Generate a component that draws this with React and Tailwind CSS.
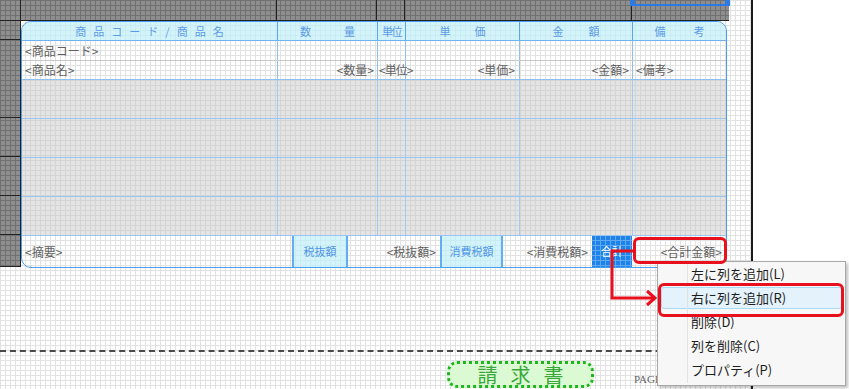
import React from "react";

const grid =
  "bg-fixed bg-[linear-gradient(to_right,#e2e2e2_1px,transparent_1px),linear-gradient(to_bottom,#e2e2e2_1px,transparent_1px)] [background-size:5px_5px]";
const darkGrid =
  "bg-fixed bg-[#8e8e8e] bg-[linear-gradient(to_right,#707070_1px,transparent_1px),linear-gradient(to_bottom,#707070_1px,transparent_1px)] [background-size:5px_5px]";
const selGrid =
  "bg-fixed bg-[#1f82e8] bg-[linear-gradient(to_right,#5eaaf2_1px,transparent_1px),linear-gradient(to_bottom,#5eaaf2_1px,transparent_1px)] [background-size:5px_5px]";

const cols = ["w-[256px]", "w-[100px]", "w-[28px]", "w-[114px]", "w-[113px]", "w-[93px]"];

function Row({ className = "", lineColor, children }) {
  return (
    <div className={`flex ${className}`}>
      {cols.map((w, i) => (
        <div
          key={i}
          className={`${w} h-full flex items-center ${i < 5 ? `border-r ${lineColor}` : ""}`}
        >
          {children ? children[i] : null}
        </div>
      ))}
    </div>
  );
}

const ph = "text-[12px] text-[#606060] leading-none whitespace-nowrap";
const hd = "text-[11px] text-[#5b9be6] leading-none whitespace-nowrap";
const label =
  "h-full flex items-center justify-center border-x-2 border-[#62aef2] bg-[#c2f0fb]/70 text-[11px] text-[#4d94e4]";

const menuItems = ["左に列を追加(L)", "右に列を追加(R)", "削除(D)", "列を削除(C)", "プロパティ(P)"];

export default function App() {
  return (
    <div
      className="relative w-[849px] h-[389px] overflow-hidden bg-white flex"
      style={{ fontFamily: '"Noto Sans CJK JP", "Noto Sans", sans-serif' }}
    >
      {/* Design canvas */}
      <div className={`w-[751px] h-full flex flex-col bg-white ${grid}`}>
        {/* page header band */}
        <div className="flex h-[21px]">
          <div className={`w-[21px] border-r border-b border-[#222] ${darkGrid}`} />
          <div className={`w-[256px] border-r border-b border-[#222] ${darkGrid}`} />
          <div className={`w-[100px] border-r border-b border-[#222] ${darkGrid}`} />
          <div className={`w-[28px] border-r border-b border-[#222] ${darkGrid}`} />
          <div className={`w-[227px] border-r border-b border-[#222] ${darkGrid}`} />
          <div className={`w-[97px] border-b border-[#222] ${darkGrid}`} />
        </div>

        {/* detail band */}
        <div className="flex">
          <div className="w-[21px] flex flex-col">
            <div className={`h-[19px] border-r border-b border-[#222] ${darkGrid}`} />
            <div className={`h-[78px] border-r border-b border-[#222] ${darkGrid}`} />
            <div className={`h-[39px] border-r border-b border-[#222] ${darkGrid}`} />
            <div className={`h-[39px] border-r border-b border-[#222] ${darkGrid}`} />
            <div className={`h-[39px] border-r border-b border-[#222] ${darkGrid}`} />
            <div className={`h-[32px] border-r border-b border-[#222] ${darkGrid}`} />
          </div>

          <div className="w-[706px] h-[247px] border border-[#4a9cec] rounded-[10px] overflow-hidden flex flex-col">
            <Row className="h-[19px] border-b border-[#6fb2f0] bg-[#c2f0fb]/70" lineColor="border-[#5aa6ee]">
              {[
                <div className={`${hd} w-full text-center tracking-[7px] pl-[7px]`}>商品コード/商品名</div>,
                <div className={`${hd} w-full flex justify-center gap-[33px]`}><span>数</span><span>量</span></div>,
                <div className={`${hd} w-full text-center tracking-[-1.5px] text-[10px]`}>単位</div>,
                <div className={`${hd} w-full flex justify-center gap-[24px]`}><span>単</span><span>価</span></div>,
                <div className={`${hd} w-full flex justify-center gap-[25px]`}><span>金</span><span>額</span></div>,
                <div className={`${hd} w-full flex justify-center gap-[28px]`}><span>備</span><span>考</span></div>,
              ]}
            </Row>
            <Row className="h-[20px] border-b border-[#c8c8c8]" lineColor="border-[#8cc0f2]">
              {[<span className={`${ph} text-[10px] pl-[3px]`}>&lt;商品コード&gt;</span>]}
            </Row>
            <Row className="h-[19px] border-b border-[#8cc0f2]" lineColor="border-[#8cc0f2]">
              {[
                <span className={`${ph} pl-[3px]`}>&lt;商品名&gt;</span>,
                <span className={`${ph} ml-auto pr-[3px]`}>&lt;数量&gt;</span>,
                <span className={`${ph} text-[8px] tracking-[-1px] pl-[1px]`}>&lt;単位&gt;</span>,
                <span className={`${ph} ml-auto pr-[4px]`}>&lt;単価&gt;</span>,
                <span className={`${ph} ml-auto pr-[3px]`}>&lt;金額&gt;</span>,
                <span className={`${ph} pl-[3px]`}>&lt;備考&gt;</span>,
              ]}
            </Row>
            {[0, 1, 2, 3].map((r) => (
              <Row key={r} className="h-[39px] border-b border-[#98c6f2] bg-[#c4c4c4]/45" lineColor="border-[#a2cbf3]" />
            ))}
            {/* footer row */}
            <div className="flex flex-1">
              <div className="w-[270px] flex items-center">
                <span className={`${ph} pl-[3px]`}>&lt;摘要&gt;</span>
              </div>
              <div className={`w-[56px] ${label}`}>税抜額</div>
              <div className="w-[92px] flex items-center justify-end pr-[4px]">
                <span className={ph}>&lt;税抜額&gt;</span>
              </div>
              <div className={`w-[63px] ${label}`}>消費税額</div>
              <div className="w-[89px] flex items-center justify-end pr-[4px]">
                <span className={ph}>&lt;消費税額&gt;</span>
              </div>
              <div className={`w-[40px] flex items-center justify-center text-[11px] text-white ${selGrid}`}>合計</div>
              <div className="w-[94px] flex items-center justify-end pr-[4px]">
                <span className={ph}>&lt;合計金額&gt;</span>
              </div>
            </div>
          </div>
        </div>

        <div className="h-[82px]" />
        <div className="h-[2px] border-t-2 border-dashed border-[#4a4a4a]" />

        {/* page footer band */}
        <div className="flex items-start pt-[9px] pl-[447px]">
          <div className="w-[147px] h-[27px] rounded-[10px] border-[3px] border-dotted border-[#1fb51f] bg-[#dbfad4] flex items-center justify-center">
            <span className="text-[20px] leading-none text-[#3aa83a] tracking-[13px] pl-[13px]">請求書</span>
          </div>
          <span
            className="ml-[40px] mt-[13px] text-[11px] text-[#666] leading-none"
            style={{ fontFamily: '"Liberation Serif", serif' }}
          >
            PAGE
          </span>
        </div>
      </div>

      <div className="w-[2px] h-full bg-[#1a1a1a]" />
      <div className="flex-1 bg-white" />

      {/* selection marker on page header */}
      <div className="absolute left-[632px] top-0 w-[96px] h-[6px] border-2 border-t-0 border-[#2b7be6]" />
      <div className="absolute left-[630px] top-0 w-[5px] h-[6px] bg-[#2b7be6]" />
      <div className="absolute left-[725px] top-0 w-[5px] h-[6px] bg-[#2b7be6]" />

      {/* context menu */}
      <div className="absolute left-[657px] top-[261px] w-[189px] h-[125px] bg-[#f7f7f7] border border-[#a8a8a8] shadow-[2px_2px_3px_rgba(0,0,0,0.25)]">
        <div className="absolute left-[29px] top-[2px] bottom-[2px] w-px bg-[#e2e2e2]" />
        <div className="flex flex-col">
          {menuItems.map((t, i) => (
            <div key={t} className="h-[24px] px-[3px] py-px">
              <div
                className={`h-full flex items-center pl-[29px] text-[13px] text-[#1e1e1e] rounded-[3px] ${
                  i === 1 ? "bg-[#e3f2fb] border border-[#a9daf3]" : "border border-transparent"
                }`}
              >
                {t}
              </div>
            </div>
          ))}
        </div>
      </div>

      {/* annotations */}
      <div className="absolute left-[633px] top-[237px] w-[94px] h-[27px] border-[3px] border-[#e8101c] rounded-[6px]" />
      <div className="absolute left-[658px] top-[283px] w-[186px] h-[34px] border-[3px] border-[#e8101c] rounded-[6px]" />
      <svg className="absolute left-0 top-0 pointer-events-none" width="849" height="389">
        <polyline points="634,251 612,251 612,298 654,298" fill="none" stroke="#e8101c" strokeWidth="3" />
        <polyline points="647,291 655,298 647,305" fill="none" stroke="#e8101c" strokeWidth="3" />
      </svg>
    </div>
  );
}
